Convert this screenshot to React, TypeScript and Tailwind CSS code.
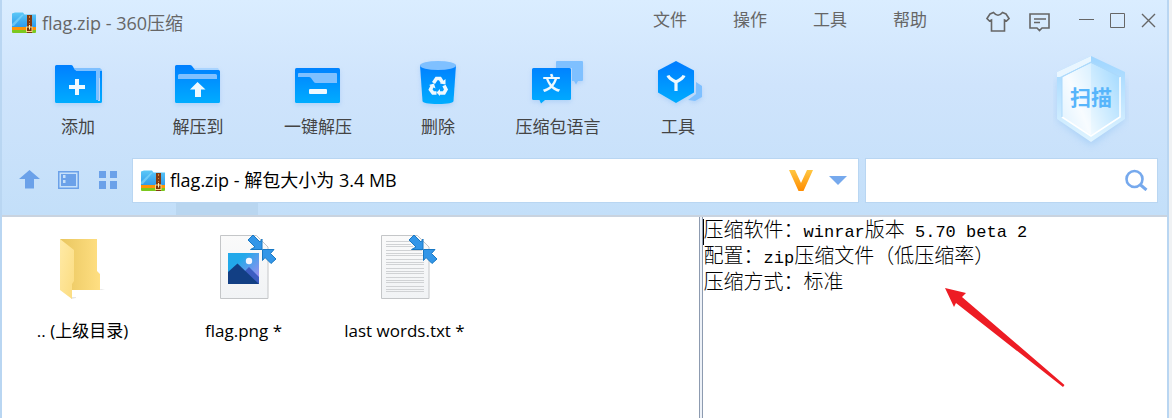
import type { ReactNode } from 'react';

function ArchiveIcon() {
  return (
    <svg width="24" height="22" viewBox="0 0 24 22" aria-hidden="true">
      <defs>
        <linearGradient id="archiveBlue" x1="0" y1="0" x2="0" y2="1">
          <stop offset="0" stopColor="#5cc8f7" />
          <stop offset="1" stopColor="#2c98ea" />
        </linearGradient>
      </defs>
      <path d="M0 1.5 3 0.5h8l1.500 2H24V16H0z" fill="url(#archiveBlue)" />
      <path d="M0 12 10 2.500H12L2 14H0z" fill="#8adcfb" opacity="0.6" />
      <path d="M0 15h24v3.500H0z" fill="#ff9406" />
      <path d="M0 18h24v2.500l-1 .5H1l-1-.5z" fill="#7cc81e" />
      <path d="M15 3h5v18h-5z" fill="#84390d" />
      <path d="M17 4h1v2h-1zm0 4h1v1h-1zm0 3h1v1h-1z" fill="#d98a3c" />
      <rect x="14.500" y="15" width="5.500" height="4.500" fill="#7a3206" stroke="#f7d68a" strokeWidth="1" />
      <path d="M17.500 13v4.500" stroke="#fff0b5" strokeWidth="1" />
    </svg>
  );
}

function AddIcon() {
  return (
    <>
      <path d="M24 10h26l2 2v8H24z" fill="#7fc0ff" />
      <path d="M5 8.500q0-1.500 1.500-1.500H21q1.200 0 1.800 1l2 4H48v33H6.500Q5 45 5 43.500z" fill="url(#toolBlue)" />
      <path d="M50 13h2v30.500q0 1.500-1.500 1.500H46V43h4z" fill="url(#toolBlue)" />
      <path d="M24.500 10H47q2 0 2 2v30h-3V13H26z" fill="#7fc0ff" />
      <path d="M25 21h4v6h6v4h-6v6h-4v-6h-6v-4h6z" fill="#eef9ff" />
    </>
  );
}

function ExtractIcon() {
  return (
    <>
      <path d="M23 10h25l1 2H24z" fill="#a9d4ff" />
      <path d="M5 8.500Q5 7 6.500 7H20q1.200 0 2 1l3 4h23.500q1.500 0 1.500 1.500v30q0 1.500-1.500 1.500h-42Q5 45 5 43.500z" fill="url(#toolBlue)" />
      <path d="M8 17.500q0-1.500 1.500-1.500h36q1.500 0 1.500 1.500V21H8z" fill="#7fc0ff" />
      <path d="m27.500 24 8 7.500H31V39h-6v-7.500h-5z" fill="#eef9ff" />
    </>
  );
}

function QuickExtractIcon() {
  return (
    <>
      <rect x="5" y="10" width="45" height="35" rx="1.500" fill="url(#toolBlue)" />
      <path d="M8 16q0-1 1-1h37q1 0 1 1v9H26q-1.500 0-2.500-1.500L21 20q-.8-1-2-1H8z" fill="#7fc0ff" />
      <rect x="19" y="31" width="18" height="5" rx="1" fill="#eef9ff" />
    </>
  );
}

function DeleteIcon() {
  return (
    <>
      <path d="M10 7h36l-2.500 36q-.3 3-15.500 3t-15.500-3z" fill="url(#toolBlue)" />
      <ellipse cx="28" cy="7.500" rx="18" ry="4.500" fill="#7fc0ff" />
      <g fill="none" stroke="#eef9ff" strokeWidth="3.600">
        <path d="m23.500 25 3-4.500h3.500l2.500 4" />
        <path d="m34 27.500 2 4-2 3.500h-4.500" />
        <path d="M26.500 35H23l-2.500-3.500 2-4" />
      </g>
      <path d="m30 25.500 5.500 1V21zM30 31v7l-3.500-3.500zM19 27l5-1.500 1.500 5z" fill="#eef9ff" />
    </>
  );
}

function LanguageIcon() {
  return (
    <>
      <path d="M26 4q0-1 1-1h25q1 0 1 1v18q0 1-1 1h-4l-2 3.500-2-3.500h-2V10H26z" fill="#7fc0ff" />
      <path d="M2 11.500Q2 10 3.500 10h36q1.500 0 1.500 1.500v29q0 1.500-1.500 1.500H15l-4 3.500L9.500 42h-6Q2 42 2 40.500z" fill="url(#toolBlue)" />
      <text x="21.500" y="32" textAnchor="middle" fontSize="18" fontWeight="700" fill="#eef9ff" className="font-['Noto_Sans_CJK_SC',sans-serif]">文</text>
    </>
  );
}

function ToolsIcon() {
  return (
    <>
      <path d="m46 24 6 4v11l-7 4-7-1 8-6z" fill="#7fc0ff" />
      <path d="M26 3 44 12.500v22L26 45 8 34.500v-22z" fill="url(#toolBlue)" />
      <path d="M18 17.500q1 3 8 6.500 7-3.500 8-6.500M26 23.500V33" fill="none" stroke="#eef9ff" strokeWidth="3.200" />
    </>
  );
}

function FolderIcon() {
  return (
    <>
      <defs>
        <linearGradient id="folderBack" x1="0" x2="1">
          <stop offset="0" stopColor="#e9c65f" />
          <stop offset="1" stopColor="#ffdf82" />
        </linearGradient>
        <linearGradient id="folderFront" x1="0" y1="0" x2="1" y2="1">
          <stop offset="0" stopColor="#ffeaa6" />
          <stop offset="1" stopColor="#fbdc80" />
        </linearGradient>
      </defs>
      <path d="M20 64v2l5-1v-1zM48 56h6l-4 1z" fill="#e6e6e6" />
      <path d="M9 6h37v32l3 3v16H18z" fill="url(#folderBack)" />
      <path d="m9 6 14 11v31l-2 3v15L9 57z" fill="url(#folderFront)" />
    </>
  );
}

function InwardArrows() {
  return (
    <g fill="#3396e8" stroke="#1878c4" strokeWidth="1">
      <path d="m36 7 5-5 7 7 2-3v10.500H38.500L43 14z" />
      <path d="M50.500 16.500H62L58.500 20.500l5.500 5.500-5 4.500-6-6-2.500 3z" />
    </g>
  );
}

function PageShape() {
  return <path d="M8.500 2.500h36L56 14v51.500H8.500z" fill="url(#pageFill)" stroke="#c4c6c8" />;
}

function PictureFileIcon() {
  return (
    <>
      <PageShape />
      <path d="M16 20h31v31H16z" fill="url(#skyFill)" />
      <circle cx="37" cy="28" r="3.200" fill="#f5f7ff" />
      <path d="m29 42 8-8 10 10v7H29z" fill="#3d5dc2" />
      <path d="M16 39 25.500 30.500 47 51H16z" fill="#123f84" />
      <InwardArrows />
    </>
  );
}

function TextFileIcon() {
  return (
    <>
      <PageShape />
      <path
        d="M13 8.500h24M13 11.500h25M13 13.500h27M13 17.500h36M13 20.500h36M13 22.500h38M13 26.500h38M13 29.500h38M13 31.500h38M13 35.500h38M13 38.500h38M13 40.500h38M13 44.500h38M13 47.500h38M13 49.500h38M13 53.500h38M13 56.500h38M13 58.500h38"
        stroke="#d0d2d4"
        strokeWidth="1"
      />
      <InwardArrows />
    </>
  );
}

const tools: { label: string; icon: ReactNode }[] = [
  { label: '添加', icon: <AddIcon /> },
  { label: '解压到', icon: <ExtractIcon /> },
  { label: '一键解压', icon: <QuickExtractIcon /> },
  { label: '删除', icon: <DeleteIcon /> },
  { label: '压缩包语言', icon: <LanguageIcon /> },
  { label: '工具', icon: <ToolsIcon /> },
];

const files: { name: string; icon: ReactNode }[] = [
  { name: '.. (上级目录)', icon: <FolderIcon /> },
  { name: 'flag.png *', icon: <PictureFileIcon /> },
  { name: 'last words.txt *', icon: <TextFileIcon /> },
];

function SharedPaints() {
  return (
    <svg width="0" height="0" className="absolute" aria-hidden="true">
      <defs>
        <linearGradient id="toolBlue" gradientUnits="userSpaceOnUse" x1="0" y1="7" x2="0" y2="45">
          <stop offset="0" stopColor="#007fff" />
          <stop offset="1" stopColor="#00acff" />
        </linearGradient>
        <linearGradient id="pageFill" x1="0" y1="0" x2="0" y2="1">
          <stop offset="0" stopColor="#fafafa" />
          <stop offset="1" stopColor="#f1f3f5" />
        </linearGradient>
        <linearGradient id="skyFill" x1="0" y1="0" x2="1" y2="1">
          <stop offset="0.300" stopColor="#22a9ea" />
          <stop offset="1" stopColor="#b58af0" />
        </linearGradient>
      </defs>
    </svg>
  );
}

function TitleBar() {
  return (
    <div className="flex h-[46px] justify-between pl-[10px] pr-[11px]">
      <div className="flex h-[46px] items-center gap-[6px] text-[#666]">
        <ArchiveIcon />
        <h1 className="text-lg">flag.zip - 360压缩</h1>
      </div>
      <div className="flex h-10 items-center">
        <nav className="mr-[36px] flex text-[#666]">
          {['文件', '操作', '工具', '帮助'].map((item) => (
            <button key={item} type="button" className="w-20">{item}</button>
          ))}
        </nav>
        <button type="button" aria-label="皮肤" className="mr-[19px]">
          <svg width="24" height="22" viewBox="0 0 24 22" fill="none" stroke="#666" strokeWidth="1.6" className="mt-1">
            <path d="M7.500 1.500Q12 7 16.500 1.500L20 3l3 4.500-2.500 2.500-2-1v11h-13v-11l-2 1L1 7.500 4 3z" />
          </svg>
        </button>
        <button type="button" aria-label="反馈" className="mr-[29px]">
          <svg width="21" height="19" viewBox="0 0 21 19" fill="none" stroke="#666" strokeWidth="1.600" className="mt-1">
            <path d="M1 1h19v14h-7l-2.500 2.500L8 15H1zM5 6h12M5 9.500h6" />
          </svg>
        </button>
        <button type="button" aria-label="最小化" className="mr-4">
          <svg width="15" height="15" viewBox="0 0 15 15" stroke="#666"><path d="M0 6.500h15" /></svg>
        </button>
        <button type="button" aria-label="最大化" className="mr-4">
          <svg width="15" height="15" viewBox="0 0 15 15" fill="none" stroke="#666"><path d="M.5.5h14v14H.5z" /></svg>
        </button>
        <button type="button" aria-label="关闭">
          <svg width="15" height="15" viewBox="0 0 15 15" stroke="#666" strokeWidth="1.400"><path d="m1 1 13 13M14 1 1 14" /></svg>
        </button>
      </div>
    </div>
  );
}

function ScanButton() {
  return (
    <button type="button" className="relative mr-[38px] h-[88px] w-[76px] shrink-0 pb-1">
      <svg width="76" height="96" viewBox="0 0 76 96" className="absolute left-0 top-0" aria-hidden="true">
        <defs>
          <linearGradient id="scanRim" x1="0" y1="0" x2="0" y2="1">
            <stop offset="0" stopColor="#9ed5ff" />
            <stop offset="1" stopColor="#e0f4ff" />
          </linearGradient>
          <linearGradient id="scanRight" x1="1" y1="0" x2="0" y2="1">
            <stop offset="0" stopColor="#9fd8ff" />
            <stop offset="1" stopColor="#f1faff" />
          </linearGradient>
          <linearGradient id="scanLeft" x1="1" y1="0" x2="0" y2="1">
            <stop offset="0" stopColor="#d9f0ff" />
            <stop offset="0.500" stopColor="#f8fcff" />
            <stop offset="1" stopColor="#ddf1ff" />
          </linearGradient>
          <filter id="scanShadow" x="-20%" y="-20%" width="140%" height="140%">
            <feGaussianBlur stdDeviation="4" />
          </filter>
        </defs>
        <path d="M38 7 71 25v39L38 89 5 64V25z" fill="#8fc2f4" opacity="0.600" filter="url(#scanShadow)" />
        <path d="M38 0 72 16v47L38 86 4 63V16z" fill="url(#scanRim)" />
        <path d="M38 0v6L7 21H4v-5z" fill="#e9f6ff" />
        <path d="M38 7v72L9 61V21z" fill="url(#scanLeft)" />
        <path d="M38 7v72L67 61V21z" fill="url(#scanRight)" />
        <path d="M67 21v40L38 80 9 61" fill="none" stroke="#fff" strokeWidth="1.500" />
        <path d="M67 21 38 6 9 21v40" fill="none" stroke="#acd9fb" strokeWidth="1" />
      </svg>
      <span className="relative text-[21px] font-bold text-[#57b5fb]">扫描</span>
    </button>
  );
}

function Toolbar() {
  return (
    <div className="flex h-28 justify-between pl-[16px]">
      <div className="flex pt-3">
        {tools.map((tool) => (
          <button key={tool.label} type="button" className="flex w-[120px] flex-col items-center text-[#444]">
            <svg width="56" height="50" viewBox="0 0 56 50" aria-hidden="true" className="drop-shadow-[0_2px_2px_rgba(90,160,240,0.25)]">
              {tool.icon}
            </svg>
            <span className="mt-[6px] leading-[26px]">{tool.label}</span>
          </button>
        ))}
      </div>
      <div className="pt-[10px]">
        <ScanButton />
      </div>
    </div>
  );
}

function LocationBar() {
  return (
    <div className="flex h-[45px] items-center pl-[17px] pr-[9px]">
      <div className="flex w-[113px] items-center pb-[2px] text-[#6ba1e9]">
        <button type="button" aria-label="上级目录" className="mr-[18px]">
          <svg width="21" height="19" viewBox="0 0 21 19" fill="currentColor"><path d="M10.500 0 21 9H15v9.500H6V9H0z" /></svg>
        </button>
        <button type="button" aria-label="列表视图" className="mr-5">
          <svg width="21" height="18" viewBox="0 0 21 18" fill="currentColor">
            <path fillRule="evenodd" d="M0 0h21v18H0zM1.500 1.500v15h18v-15z" />
            <path fillRule="evenodd" d="M3 3h15v12H3zM5 4v3h2.500V4zm0 5v3h2.500V9z" />
          </svg>
        </button>
        <button type="button" aria-label="图标视图">
          <svg width="18" height="18" viewBox="0 0 18 18" fill="currentColor"><path d="M0 0h7v7H0zM11 0h7v7h-7zM0 10h7v8H0zM11 10h7v8h-7z" /></svg>
        </button>
      </div>
      <div className="flex h-[45px] min-w-0 flex-[5_1_0] items-center border border-[#b9d6f2] bg-white pl-2 pr-[11px]">
        <ArchiveIcon />
        <input aria-label="地址" defaultValue="flag.zip - 解包大小为 3.4 MB" className="ml-[5px] h-10 min-w-0 flex-1 bg-transparent pb-1 text-lg text-black outline-none" />
        <button type="button" aria-label="会员" className="mr-4">
          <svg width="24" height="22" viewBox="0 0 24 22">
            <defs>
              <linearGradient id="memberGold" x1="0" y1="0" x2="0" y2="1">
                <stop offset="0" stopColor="#ffc742" />
                <stop offset="1" stopColor="#ff8c00" />
              </linearGradient>
            </defs>
            <path d="M0 0h6l6 13 6-13h6l-9.500 21h-5z" fill="url(#memberGold)" />
          </svg>
        </button>
        <button type="button" aria-label="展开">
          <svg width="18" height="9" viewBox="0 0 18 9" fill="#76a9ed"><path d="M0 0h18L9 9z" /></svg>
        </button>
      </div>
      <div className="ml-1.5 flex h-[45px] min-w-0 flex-[2_1_0] items-center border border-[#b9d6f2] bg-white pb-[2px] pr-[9px]">
        <input type="search" aria-label="搜索" className="h-10 min-w-0 flex-1 bg-transparent px-2 outline-none" />
        <button type="button" aria-label="开始搜索">
          <svg width="24" height="22" viewBox="0 0 24 22" fill="none" stroke="#76a9ed">
            <circle cx="10.500" cy="10" r="8" strokeWidth="2.600" />
            <path d="m16 15.500 6.500 5.500" strokeWidth="3" />
          </svg>
        </button>
      </div>
    </div>
  );
}

const latin = 'text-[17px] font-normal';

function CommentPane() {
  return (
    <section aria-label="注释" className="relative min-w-0 flex-[2_1_0] bg-white pt-[2px] font-['Liberation_Mono','Noto_Sans_CJK_SC',monospace] text-[20px] font-light leading-[26px] text-black">
      <p className="h-[26px] border-l border-black">压缩软件：<span className={latin}>winrar</span>版本<span className={latin}> 5.70 beta 2</span></p>
      <p className="h-[26px] pl-px">配置：<span className={latin}>zip</span>压缩文件（低压缩率）</p>
      <p className="h-[26px] pl-px">压缩方式：标准</p>
      <svg width="122" height="102" viewBox="0 0 122 102" className="absolute left-[242px] top-[70px]" aria-hidden="true">
        <path d="M0 1 21 6l-4 4L119.500 98l-1.500 2L11 16l-2 4z" fill="#ed1c24" />
      </svg>
    </section>
  );
}

export default function App() {
  return (
    <div className="flex min-h-screen bg-[#e9eef3] font-['Open_Sans','Noto_Sans_CJK_SC',sans-serif] text-[17px] leading-[26px]">
      <SharedPaints />
      <main className="flex min-w-0 flex-1 flex-col border-x-2 border-[#b9d6f2] bg-[#c3dff9]">
        <header className="bg-linear-to-b from-[#daedff] via-[#cfe4fc] via-40% to-[#c3dff9]">
          <TitleBar />
          <Toolbar />
          <LocationBar />
          <div className="h-3 pl-[174px]"><div className="h-3 w-[82px] bg-[#b9d6f0]" /></div>
        </header>
        <div className="flex flex-1 border-t-2 border-[#c9d3df]">
          <section aria-label="文件" className="flex min-w-0 flex-[3_1_0] bg-white pt-4">
            {files.map((file) => (
              <button key={file.name} type="button" className="flex h-28 w-[161px] flex-col items-center text-black">
                <svg width="64" height="68" viewBox="0 0 64 68" aria-hidden="true">{file.icon}</svg>
                <span className="mt-[17px] whitespace-nowrap">{file.name}</span>
              </button>
            ))}
          </section>
          <div className="w-1 border-x border-[#8d9bb0] bg-[#eef2f8]" />
          <CommentPane />
        </div>
      </main>
      <aside className="w-[3px] shrink-0 bg-[#f0f2f4]" />
    </div>
  );
}
